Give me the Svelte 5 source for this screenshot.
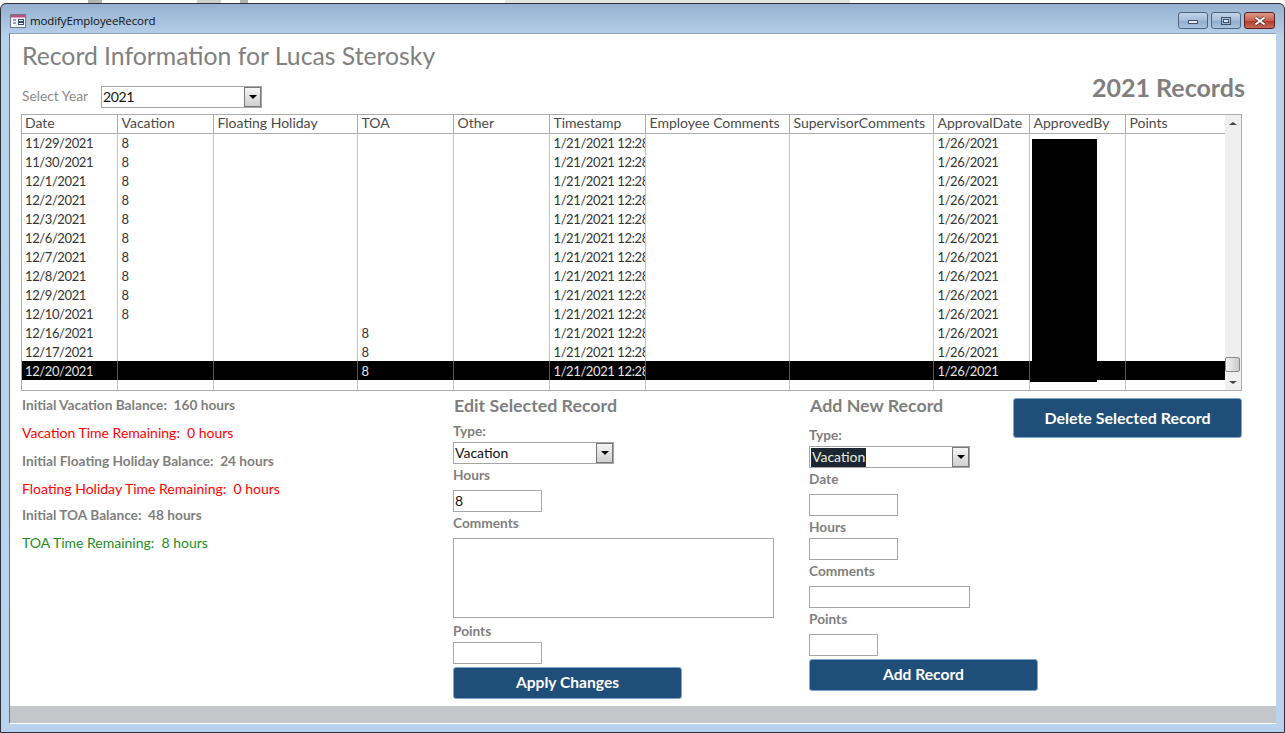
<script>
    const columns = ['Date', 'Vacation', 'Floating Holiday', 'TOA', 'Other', 'Timestamp', 'Employee Comments', 'SupervisorComments', 'ApprovalDate', 'ApprovedBy', 'Points'];

    const rows = [
        { date: '11/29/2021', vacation: '8', toa: '' },
        { date: '11/30/2021', vacation: '8', toa: '' },
        { date: '12/1/2021', vacation: '8', toa: '' },
        { date: '12/2/2021', vacation: '8', toa: '' },
        { date: '12/3/2021', vacation: '8', toa: '' },
        { date: '12/6/2021', vacation: '8', toa: '' },
        { date: '12/7/2021', vacation: '8', toa: '' },
        { date: '12/8/2021', vacation: '8', toa: '' },
        { date: '12/9/2021', vacation: '8', toa: '' },
        { date: '12/10/2021', vacation: '8', toa: '' },
        { date: '12/16/2021', vacation: '', toa: '8' },
        { date: '12/17/2021', vacation: '', toa: '8' },
        { date: '12/20/2021', vacation: '', toa: '8', selected: true }
    ];

    const balances = [
        { text: 'Initial Vacation Balance:  160 hours', tone: 'bold' },
        { text: 'Vacation Time Remaining:  0 hours', tone: 'red' },
        { text: 'Initial Floating Holiday Balance:  24 hours', tone: 'bold' },
        { text: 'Floating Holiday Time Remaining:  0 hours', tone: 'red' },
        { text: 'Initial TOA Balance:  48 hours', tone: 'bold short' },
        { text: 'TOA Time Remaining:  8 hours', tone: 'green' }
    ];
</script>

<div class="behind">
    <span class="scrap s1"></span><span class="scrap s2"></span><span class="scrap s3"></span><span class="scrap s4"></span>
</div>

<div class="window">
    <div class="titlebar">
        <svg class="formicon" width="16" height="14" viewBox="0 0 16 14">
            <rect x="0.5" y="0.5" width="15" height="13" fill="#f4f6fa" stroke="#6d7690"/>
            <rect x="1" y="1" width="14" height="2.5" fill="#c0507c"/>
            <path d="M3 6h3M3 9h3" stroke="#3a4a78" fill="none"/>
            <rect x="8.5" y="5.5" width="5" height="2" fill="none" stroke="#3a4a78"/>
            <rect x="8.5" y="8.5" width="5" height="2" fill="none" stroke="#3a4a78"/>
        </svg>
        <span class="wintitle">modifyEmployeeRecord</span>
        <div class="winbtns">
            <div class="winbtn"><svg width="12" height="8" viewBox="0 0 12 8"><rect x="1.5" y="3.5" width="9" height="3" fill="#e8eef6" stroke="#3f4f6a"/></svg></div>
            <div class="winbtn"><svg width="12" height="10" viewBox="0 0 12 10"><rect x="1.5" y="1.5" width="9" height="7" fill="none" stroke="#3f4f6a" stroke-width="1"/><rect x="3.5" y="3.5" width="5" height="3" fill="#dfe8f2" stroke="#3f4f6a"/></svg></div>
            <div class="winbtn close"><svg width="16" height="10" viewBox="0 0 16 10"><path d="M3.5 1.5 12.5 8.5M12.5 1.5 3.5 8.5" stroke="#4a1c14" stroke-width="3.4"/><path d="M3.5 1.5 12.5 8.5M12.5 1.5 3.5 8.5" stroke="#fff" stroke-width="2.2"/></svg></div>
        </div>
    </div>

    <div class="form">
        <div class="body">
            <div class="head">
                <div>
                    <h1>Record Information for Lucas Sterosky</h1>
                    <div class="yearrow">
                        <span class="yearlabel">Select Year</span>
                        <div class="combo year"><span class="val">2021</span><span class="drop"><i></i></span></div>
                    </div>
                </div>
                <div class="recordsyear">2021 Records</div>
            </div>

            <div class="grid">
                <table>
                    <thead>
                        <tr>
                            {#each columns as c}<th>{c}</th>{/each}
                        </tr>
                    </thead>
                    <tbody>
                        {#each rows as r}
                            <tr class:selected={r.selected}>
                                <td>{r.date}</td>
                                <td>{r.vacation}</td>
                                <td></td>
                                <td>{r.toa}</td>
                                <td></td>
                                <td>1/21/2021 12:28</td>
                                <td></td>
                                <td></td>
                                <td>1/26/2021</td>
                                <td></td>
                                <td></td>
                            </tr>
                        {/each}
                        <tr class="blank">
                            {#each columns as c}<td></td>{/each}
                        </tr>
                    </tbody>
                </table>
                <div class="scrollbar">
                    <span class="arrow up"></span>
                    <span class="thumb"></span>
                    <span class="arrow down"></span>
                </div>
                <div class="redact r1"></div>
                <div class="redact r2"></div>
            </div>

            <div class="lower">
                <div class="balances">
                    {#each balances as b}
                        <div class="balance {b.tone}">{b.text}</div>
                    {/each}
                </div>

                <div class="edit">
                    <h2>Edit Selected Record</h2>
                    <label class="first">Type:</label>
                    <div class="combo type"><span class="val">Vacation</span><span class="drop"><i></i></span></div>
                    <label>Hours</label>
                    <div class="input short">8</div>
                    <label>Comments</label>
                    <div class="input area"></div>
                    <label class="points">Points</label>
                    <div class="input short"></div>
                    <div class="btn apply">Apply Changes</div>
                </div>

                <div class="add">
                    <h2>Add New Record</h2>
                    <label class="first">Type:</label>
                    <div class="combo type"><span class="val hl">Vacation</span><span class="drop"><i></i></span></div>
                    <label>Date</label>
                    <div class="input short"></div>
                    <label class="tight">Hours</label>
                    <div class="input short"></div>
                    <label>Comments</label>
                    <div class="input wide"></div>
                    <label>Points</label>
                    <div class="input shorter"></div>
                    <div class="btn addbtn">Add Record</div>
                </div>

                <div class="btn del">Delete Selected Record</div>
            </div>
        </div>
        <div class="footer"></div>
    </div>
</div>

<style>
    :global(body) {
        margin: 0;
        background: #fff;
        overflow: hidden;
    }

    .behind {
        height: 3px;
        position: relative;
        background: #fff;
    }
    .scrap { position: absolute; top: 0; height: 3px; background: #b4b4b4; }
    .s1 { left: 88px; width: 14px; }
    .s2 { left: 197px; width: 24px; background: #d0d0d0; }
    .s3 { left: 240px; width: 8px; }
    .s4 { left: 505px; width: 345px; background: #e4e4e4; }

    .window {
        height: 730px;
        box-sizing: border-box;
        display: flex;
        flex-direction: column;
        border: 1px solid #2c3038;
        border-radius: 6px 6px 0 0;
        background: linear-gradient(to bottom, #95b1cf 0, #b9d2ec 34px, #b9d3ee 100%);
        font-family: Lato, "Liberation Sans", sans-serif;
        color: #7f7f7f;
    }

    .titlebar {
        height: 29px;
        box-sizing: border-box;
        flex: none;
        display: flex;
        align-items: center;
        padding: 4px 0 0 9px;
    }
    .formicon { margin-right: 4px; }
    .wintitle {
        font-family: "Open Sans", sans-serif;
        font-size: 11.5px;
        color: #101010;
        letter-spacing: -0.1px;
    }
    .winbtns {
        margin-left: auto;
        margin-right: 9px;
        display: flex;
        gap: 3px;
    }
    .winbtn {
        width: 28px;
        height: 15px;
        border: 1px solid #4e6480;
        border-radius: 3px;
        display: flex;
        align-items: center;
        justify-content: center;
        background: linear-gradient(to bottom, #c2d4e8 0, #a3bcd8 50%, #8eaac9 51%, #a9c4e0 100%);
    }
    .winbtn.close {
        width: 29px;
        border-color: #5c2020;
        background: linear-gradient(to bottom, #dc9a8c 0, #c85f4e 50%, #b0392a 51%, #c66a55 100%);
    }

    .form {
        flex: 1;
        margin: 0 8px 8px 8px;
        background: #fff;
        display: flex;
        flex-direction: column;
        border-top: 1px solid #8aa0bc;
        border-left: 1px solid #5f7186;
        border-bottom: 1px solid #fff;
    }
    .body {
        flex: 1;
        padding: 0 33px 0 12px;
    }
    .footer {
        height: 17px;
        background: #c5c6c9;
    }

    .head {
        display: flex;
        justify-content: space-between;
        align-items: flex-end;
        height: 80px;
    }
    h1 {
        margin: 0;
        padding-top: 5px;
        height: 34px;
        font-size: 24.75px;
        line-height: 34px;
        font-weight: 400;
        color: #808080;
    }
    .yearrow {
        display: flex;
        align-items: center;
        margin-top: 13px;
        margin-bottom: 6px;
    }
    .yearlabel {
        font-size: 13.8px;
        width: 79px;
        padding-bottom: 3px;
        color: #8a8a8a;
    }
    .recordsyear {
        font-size: 25px;
        font-weight: 700;
        color: #7f7f7f;
        line-height: 30px;
        margin-right: -2px;
        margin-bottom: 12px;
    }

    .combo {
        display: flex;
        align-items: center;
        box-sizing: border-box;
        height: 22px;
        border: 1px solid #a6a6a6;
        background: #fff;
        color: #111;
        font-size: 14px;
        padding-left: 1px;
    }
    .combo.year { width: 161px; }
    .combo.year .val { letter-spacing: -0.4px; }
    .combo.type { width: 161px; }
    .val { flex: 1; line-height: 18px; padding-bottom: 1px; }
    .val.hl { flex: none; background: #1c2733; color: #e8f0d8; padding: 0 1px 1px; }
    .val.hl + .drop { margin-left: auto; }
    .drop {
        box-sizing: border-box;
        width: 17px;
        height: 20px;
        border: 1px solid #777;
        background: linear-gradient(to bottom, #f6f6f6, #cfcfcf);
        display: flex;
        align-items: center;
        justify-content: center;
        flex: none;
    }
    .drop i {
        width: 0;
        height: 0;
        border-left: 4px solid transparent;
        border-right: 4px solid transparent;
        border-top: 4px solid #000;
    }

    .grid {
        position: relative;
        width: 1221px;
        height: 277px;
        margin-left: -1px;
        box-sizing: border-box;
        border: 1px solid #ababab;
        display: flex;
    }
    table {
        width: 1203px;
        flex: none;
        table-layout: fixed;
        border-collapse: collapse;
        font-size: 13px;
        letter-spacing: -0.4px;
        color: #333;
        height: 275px;
    }
    th {
        width: 96px;
        box-sizing: border-box;
        height: 18px;
        font-size: 14px;
        letter-spacing: 0;
        font-weight: 400;
        line-height: 16px;
        text-align: left;
        padding: 0 0 1px 4px;
        border-right: 1px solid #ababab;
        border-bottom: 1px solid #ababab;
        color: #4a4a4a;
        white-space: nowrap;
        overflow: hidden;
    }
    th:first-child { width: 95px; padding-left: 3px; }
    th:nth-child(3), th:nth-child(7), th:nth-child(8) { width: 144px; }
    th:nth-child(11) { width: 100px; border-right: none; }
    td {
        box-sizing: border-box;
        height: 19px;
        padding: 0 0 0 4px;
        border-right: 1px solid #c4c4c4;
        white-space: nowrap;
        overflow: hidden;
        line-height: 18px;
    }
    td:first-child { padding-left: 3px; }
    td:last-child { border-right: none; }
    tr.selected td {
        background: #000;
        color: #e6e6e6;
        border-right-color: #555;
    }
    tr.blank td { height: auto; }

    .scrollbar {
        flex: 1;
        background: #efefef;
        position: relative;
    }
    .arrow {
        position: absolute;
        left: 4px;
        width: 0;
        height: 0;
        border-left: 4px solid transparent;
        border-right: 4px solid transparent;
    }
    .arrow.up { top: 7px; border-bottom: 3px solid #444; }
    .arrow.down { bottom: 6px; border-top: 3px solid #444; }
    .thumb {
        position: absolute;
        left: 0;
        right: 1px;
        bottom: 18px;
        height: 15px;
        box-sizing: border-box;
        border: 1px solid #8a8a8a;
        border-radius: 2px;
        background: linear-gradient(to right, #f4f4f4, #c8c8c8);
    }
    .redact { position: absolute; background: #000; }
    .r1 { left: 1010px; top: 24px; width: 65px; height: 224px; }
    .r2 { left: 1008px; top: 247px; width: 67px; height: 20px; }

    .lower {
        display: flex;
        align-items: flex-start;
        color: #7f7f7f;
    }
    .balances { width: 431px; padding-top: 4px; }
    .balance {
        font-size: 14px;
        height: 28px;
        line-height: 19px;
        white-space: pre;
    }
    .balance.short { margin-top: -2px; }
    .balance.bold { font-size: 13.7px; font-weight: 700; color: #7f7f7f; }
    .balance.red { color: #f00; }
    .balance.green { color: #1f8c1f; }

    .edit { width: 356px; }
    .add { width: 204px; }
    h2 {
        margin: 0;
        padding: 5px 0 0 1px;
        font-size: 17.8px;
        line-height: 19px;
        font-weight: 700;
    }
    label {
        display: block;
        font-size: 13.7px;
        font-weight: 700;
        line-height: 22px;
        height: 26px;
        color: #7f7f7f;
    }
    label.tight { height: 22px; }
    .edit label.first { height: 27px; line-height: 32px; }
    .add label.first { height: 31px; line-height: 40px; }
    label.points { height: 24px; line-height: 26px; }
    .input {
        box-sizing: border-box;
        height: 22px;
        border: 1px solid #a6a6a6;
        color: #111;
        font-size: 14px;
        line-height: 20px;
        padding-left: 1px;
    }
    .input.short { width: 89px; }
    .input.shorter { width: 69px; }
    .input.wide { width: 161px; }
    .input.area { width: 321px; height: 80px; }

    .btn {
        box-sizing: border-box;
        background: #1f4e79;
        color: #fff;
        font-weight: 700;
        font-size: 15.6px;
        display: flex;
        align-items: center;
        justify-content: center;
        padding-bottom: 2px;
        border: 1px solid #7ea6cf;
        border-radius: 3px;
    }
    .btn.apply { width: 229px; height: 32px; margin-top: 3px; }
    .btn.addbtn { width: 229px; height: 32px; margin-top: 3px; }
    .btn.del {
        width: 229px;
        height: 40px;
        margin-top: 7px;
        font-size: 16px;
    }
</style>
